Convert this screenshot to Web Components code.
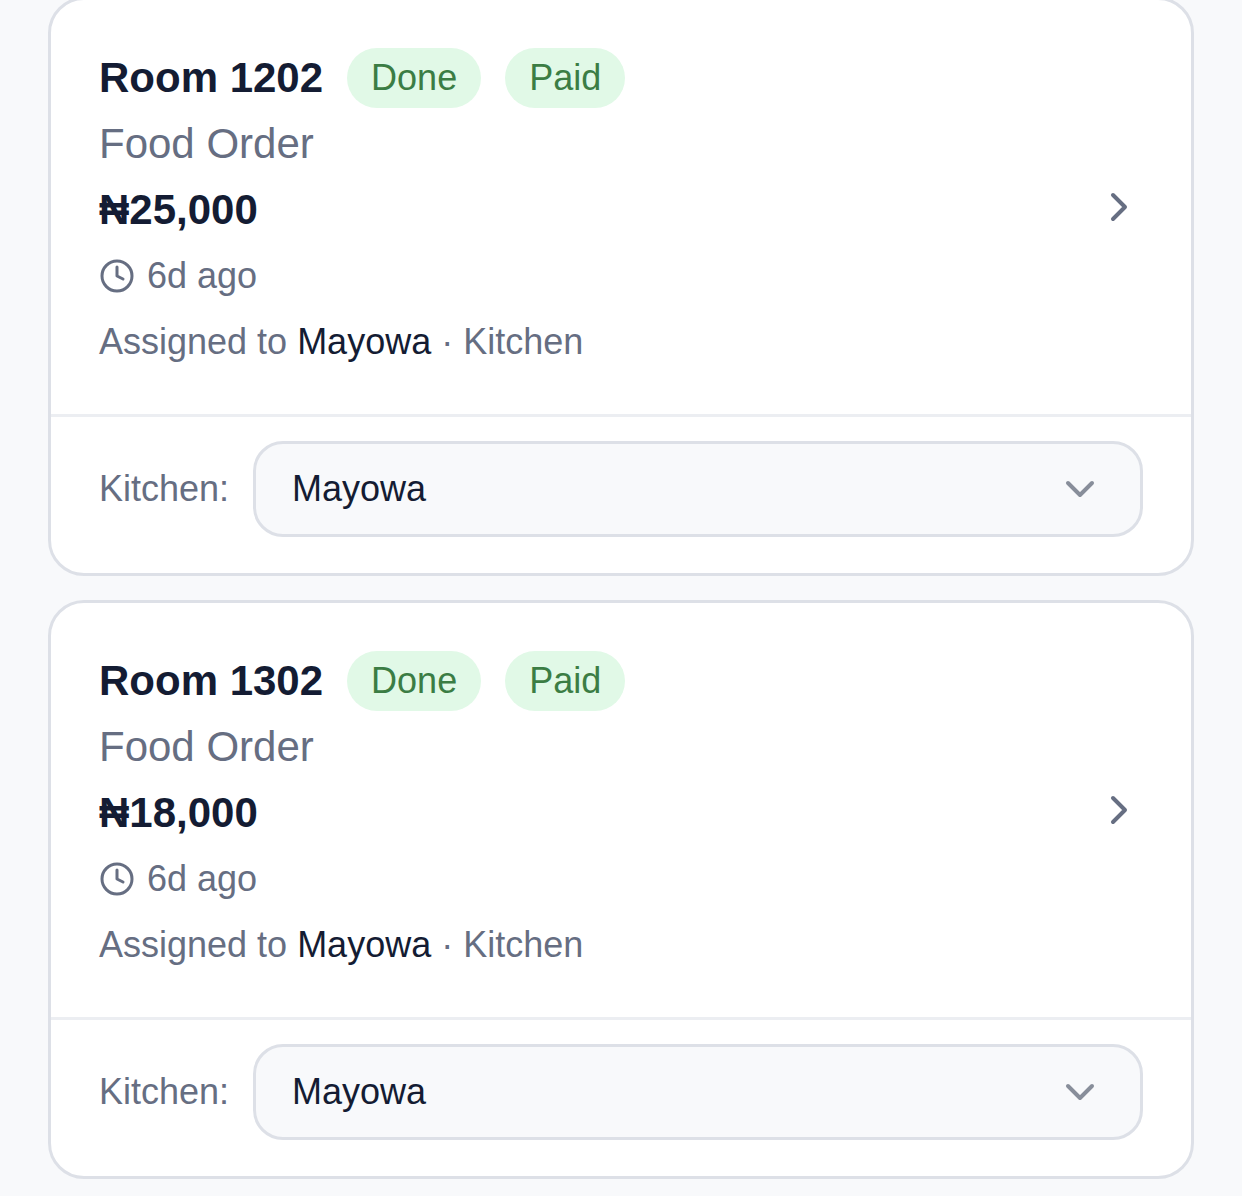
<!DOCTYPE html>
<html lang="en">
<head>
<meta charset="utf-8">
<meta name="viewport" content="width=device-width, initial-scale=1">
<title>Orders</title>
<style>
    :root{
        --bg:#f8f9fb;
        --card:#fff;
        --ink:#141c33;
        --muted:#666e82;
        --line:#dde0e7;
        --line-soft:#eceef2;
        --green:#3b7d44;
        --green-bg:#e1f9e7;
    }

    body{
        margin:0;
        background:var(--bg);
        color:var(--ink);
        font-family:"Liberation Sans", Arial, sans-serif;
        font-size:36px;
        line-height:48px;
    }
</style>
</head>
<body>

<order-list>
    <order-card href="#order-1202">
        <span slot="room">Room 1202</span>
        <status-badge slot="badges">Done</status-badge>
        <status-badge slot="badges">Paid</status-badge>
        <span slot="type">Food Order</span>
        <span slot="amount">₦25,000</span>
        <span slot="time">6d ago</span>
        <span slot="staff">Mayowa</span>
        <span slot="department">Kitchen</span>
        <staff-select slot="footer" label="Kitchen:" options="Mayowa"></staff-select>
    </order-card>
    <order-card href="#order-1302">
        <span slot="room">Room 1302</span>
        <status-badge slot="badges">Done</status-badge>
        <status-badge slot="badges">Paid</status-badge>
        <span slot="type">Food Order</span>
        <span slot="amount">₦18,000</span>
        <span slot="time">6d ago</span>
        <span slot="staff">Mayowa</span>
        <span slot="department">Kitchen</span>
        <staff-select slot="footer" label="Kitchen:" options="Mayowa"></staff-select>
    </order-card>
</order-list>

<script>
class OrderList extends HTMLElement{

    constructor(){
        super();
        this.shadow = this.attachShadow({mode:'open'});
        this.render();
    }

    render(){
        this.shadow.innerHTML = `
        <style>
        :host{
            display:flex;
            flex-direction:column;
            gap:24px;
            margin:-3px 48px 0;
            padding-bottom:16px;
        }
        </style>
        <slot></slot>
        `;
    }
}

class StatusBadge extends HTMLElement{

    constructor(){
        super();
        this.shadow = this.attachShadow({mode:'open'});
        this.render();
    }

    render(){
        this.shadow.innerHTML = `
        <style>
        :host{
            display:block;
            padding:0 24px;
            border-radius:30px;
            background:var(--green-bg);
            color:var(--green);
            font-size:36px;
            font-weight:400;
            line-height:60px;
        }
        </style>
        <slot></slot>
        `;
    }
}

class StaffSelect extends HTMLElement{

    constructor(){
        super();
        this.shadow = this.attachShadow({mode:'open'});
    }

    connectedCallback(){
        this.render();
        this.select = this.shadow.querySelector('select');
        this.shadow.querySelector('label').textContent = this.getAttribute('label');
        this.fillOptions();
        this.select.addEventListener('change', (e)=>this.onChange(e));
    }

    fillOptions(){
        this.getAttribute('options').split(',').forEach(name => {
            this.select.appendChild(new Option(name.trim()));
        });
    }

    onChange(e){
        this.dispatchEvent(new CustomEvent('staffChange', {
            detail:{
                name:e.target.value
            }
        }));
    }

    render(){
        this.shadow.innerHTML = `
        <style>
        :host{
            display:flex;
            align-items:center;
            gap:24px;
        }

        label{
            color:var(--muted);
        }

        .field{
            flex:1;
            min-width:0;
            display:grid;
            align-items:center;
        }

        select, svg{
            grid-area:1 / 1;
        }

        select{
            appearance:none;
            box-sizing:border-box;
            width:100%;
            height:96px;
            margin:0;
            padding:0 96px 0 36px;
            border:3px solid var(--line);
            border-radius:30px;
            background:var(--bg);
            color:var(--ink);
            font:inherit;
        }

        svg{
            justify-self:end;
            width:48px;
            height:48px;
            margin-right:39px;
            color:#888e9a;
            pointer-events:none;
        }
        </style>
        <label for="staff"></label>
        <div class="field">
            <select id="staff"></select>
            <svg viewBox="0 0 24 24" fill="none" stroke="currentColor" stroke-width="2" stroke-linecap="round" stroke-linejoin="round" aria-hidden="true">
                <path d="m6 9 6 6 6-6"/>
            </svg>
        </div>
        `;
    }
}

class OrderCard extends HTMLElement{

    constructor(){
        super();
        this.shadow = this.attachShadow({mode:'open'});
        this.render();
    }

    connectedCallback(){
        this.shadow.querySelector('.summary').href = this.getAttribute('href');
    }

    render(){
        this.shadow.innerHTML = `
        <style>
        :host{
            display:block;
            border:3px solid var(--line);
            border-radius:36px;
            background:var(--card);
        }

        .summary{
            display:flex;
            align-items:center;
            gap:24px;
            padding:48px;
            color:var(--muted);
            text-decoration:none;
        }

        .info{
            flex:1;
            min-width:0;
        }

        .heading{
            display:flex;
            flex-wrap:wrap;
            align-items:center;
            gap:24px;
            margin-bottom:12px;
        }

        .details{
            display:flex;
            flex-direction:column;
            gap:18px;
        }

        .room, .type, .amount{
            font-size:42px;
        }

        .room, .amount{
            color:var(--ink);
            font-weight:700;
        }

        .time{
            display:flex;
            align-items:center;
            gap:12px;
        }

        .staff{
            color:var(--ink);
        }

        svg{
            flex:none;
        }

        .clock{
            width:36px;
            height:36px;
        }

        .chevron{
            width:48px;
            height:48px;
        }

        .footer{
            padding:24px 48px 36px;
            border-top:3px solid var(--line-soft);
        }
        </style>
        <a class="summary">
            <div class="info">
                <div class="heading">
                    <div class="room"><slot name="room"></slot></div>
                    <slot name="badges"></slot>
                </div>
                <div class="details">
                    <div class="type"><slot name="type"></slot></div>
                    <div class="amount"><slot name="amount"></slot></div>
                    <div class="time">
                        <svg class="clock" viewBox="0 0 24 24" fill="none" stroke="currentColor" stroke-width="2" stroke-linecap="round" stroke-linejoin="round" aria-hidden="true">
                            <circle cx="12" cy="12" r="10"/>
                            <path d="M12 6v6l4 2"/>
                        </svg>
                        <slot name="time"></slot>
                    </div>
                    <div>Assigned to <span class="staff"><slot name="staff"></slot></span> · <slot name="department"></slot></div>
                </div>
            </div>
            <svg class="chevron" viewBox="0 0 24 24" fill="none" stroke="currentColor" stroke-width="2" stroke-linecap="round" stroke-linejoin="round" aria-hidden="true">
                <path d="m9 18 6-6-6-6"/>
            </svg>
        </a>
        <div class="footer"><slot name="footer"></slot></div>
        `;
    }
}

customElements.define('order-list', OrderList);
customElements.define('status-badge', StatusBadge);
customElements.define('staff-select', StaffSelect);
customElements.define('order-card', OrderCard);
</script>
</body>
</html>
